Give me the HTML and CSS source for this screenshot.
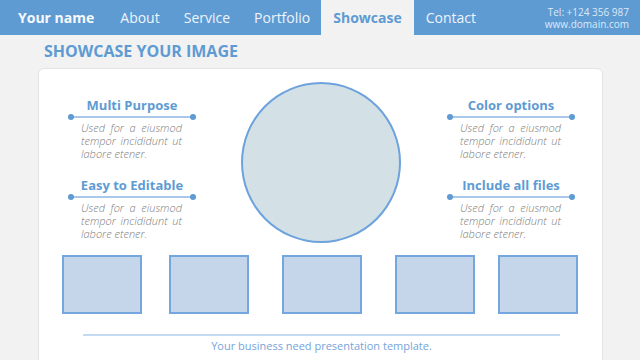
FILE: index.html
```html
<!DOCTYPE html>
<html>
<head>
    <link rel="stylesheet" href="styles.css">
</head>
<body>
    <div class="navbar">
        <span class="brand">Your name</span>
        <a class="nav-link">About</a>
        <a class="nav-link">Service</a>
        <a class="nav-link">Portfolio</a>
        <a class="nav-link active">Showcase</a>
        <a class="nav-link">Contact</a>
        <div class="contact-info">
            <span>Tel: +124 356 987</span>
            <span>www.domain.com</span>
        </div>
    </div>

    <div class="page">
        <h1 class="page-title">SHOWCASE YOUR IMAGE</h1>

        <div class="card">
            <div class="showcase">
                <div class="features">
                    <div class="feature">
                        <h2>Multi Purpose</h2>
                        <div class="rule"></div>
                        <p>Used for a eiusmod tempor incididunt ut labore etener.</p>
                    </div>
                    <div class="feature">
                        <h2>Easy to Editable</h2>
                        <div class="rule"></div>
                        <p>Used for a eiusmod tempor incididunt ut labore etener.</p>
                    </div>
                </div>

                <div class="circle"></div>

                <div class="features">
                    <div class="feature">
                        <h2>Color options</h2>
                        <div class="rule"></div>
                        <p>Used for a eiusmod tempor incididunt ut labore etener.</p>
                    </div>
                    <div class="feature">
                        <h2>Include all files</h2>
                        <div class="rule"></div>
                        <p>Used for a eiusmod tempor incididunt ut labore etener.</p>
                    </div>
                </div>
            </div>

            <div class="thumbs">
                <div class="thumb"></div>
                <div class="thumb"></div>
                <div class="thumb"></div>
                <div class="thumb"></div>
                <div class="thumb"></div>
            </div>

            <div class="footer">
                <p>Your business need presentation template.</p>
            </div>
        </div>
    </div>
</body>
</html>
```

FILE: styles.css
```css
body {
    margin: 0;
    background-color: #f2f2f2;
    font-family: 'Open Sans', 'Liberation Sans', sans-serif;
    overflow: hidden;
}
.navbar {
    height: 35px;
    background-color: #5e9bd3;
    display: flex;
    align-items: center;
    color: #eef4fb;
    font-size: 14px;
}
.brand {
    font-weight: bold;
    padding: 0 14px 0 18px;
    color: #f6f9fd;
}
.nav-link {
    height: 35px;
    line-height: 35px;
    padding: 0 12px;
}
.nav-link.active {
    background-color: #f2f2f2;
    color: #5e9bd3;
    font-weight: bold;
    margin-left: -1px;
}
.contact-info {
    margin-left: auto;
    margin-right: 11px;
    display: flex;
    flex-direction: column;
    align-items: flex-end;
    font-size: 10px;
    line-height: 12px;
    color: #dde9f6;
    margin-top: 1px;
}
.page {
    padding-left: 38px;
}
.page-title {
    margin: 0;
    padding: 4px 0 0 6px;
    height: 29px;
    font-size: 16px;
    line-height: 24px;
    color: #5e9bd3;
    font-weight: bold;
}
.card {
    width: 563px;
    height: 300px;
    background-color: #fff;
    border: 1px solid #e4e4e4;
    border-radius: 6px;
}
.showcase {
    display: flex;
    padding: 13px 0 0 31px;
}
.features {
    width: 124px;
    padding-top: 15px;
}
.feature {
    height: 80px;
}
.feature:last-child {
    height: 60px;
}
.feature h2 {
    margin: 0;
    font-size: 13px;
    line-height: 16px;
    color: #5e9bd3;
    text-align: center;
    font-weight: bold;
}
.rule {
    position: relative;
    height: 2px;
    margin: 3px 0 3px;
    background-color: #a9c8ea;
}
.rule::before, .rule::after {
    content: "";
    position: absolute;
    top: -2px;
    width: 6px;
    height: 6px;
    border-radius: 50%;
    background-color: #5e9bd3;
}
.rule::before {
    left: -2px;
}
.rule::after {
    right: -2px;
}
.feature p {
    margin: 0;
    padding: 0 12px 0 11px;
    font-size: 11px;
    line-height: 13px;
    font-style: italic;
    font-weight: 300;
    color: #7c7c7c;
    text-align: justify;
    text-align-last: left;
}
.circle {
    width: 156px;
    height: 157px;
    margin: 0 48px 0 47px;
    border: 2px solid #6da2dc;
    border-radius: 50%;
    background-color: #d3e1e7;
}
.thumbs {
    display: flex;
    margin: 12px 0 0 23px;
}
.thumb {
    width: 76px;
    height: 55px;
    border: 2px solid #74a7dd;
    background-color: #c5d5ea;
}
.thumb:nth-child(2) {
    margin-left: 27px;
}
.thumb:nth-child(3),
.thumb:nth-child(4) {
    margin-left: 33px;
}
.thumb:nth-child(5) {
    margin-left: 23px;
}
.footer {
    margin: 20px 42px 0 44px;
    border-top: 2px solid #c4daf1;
}
.footer p {
    margin: 0;
    padding-top: 2px;
    text-align: center;
    font-size: 11px;
    line-height: 16px;
    color: #77a4d9;
}
```
